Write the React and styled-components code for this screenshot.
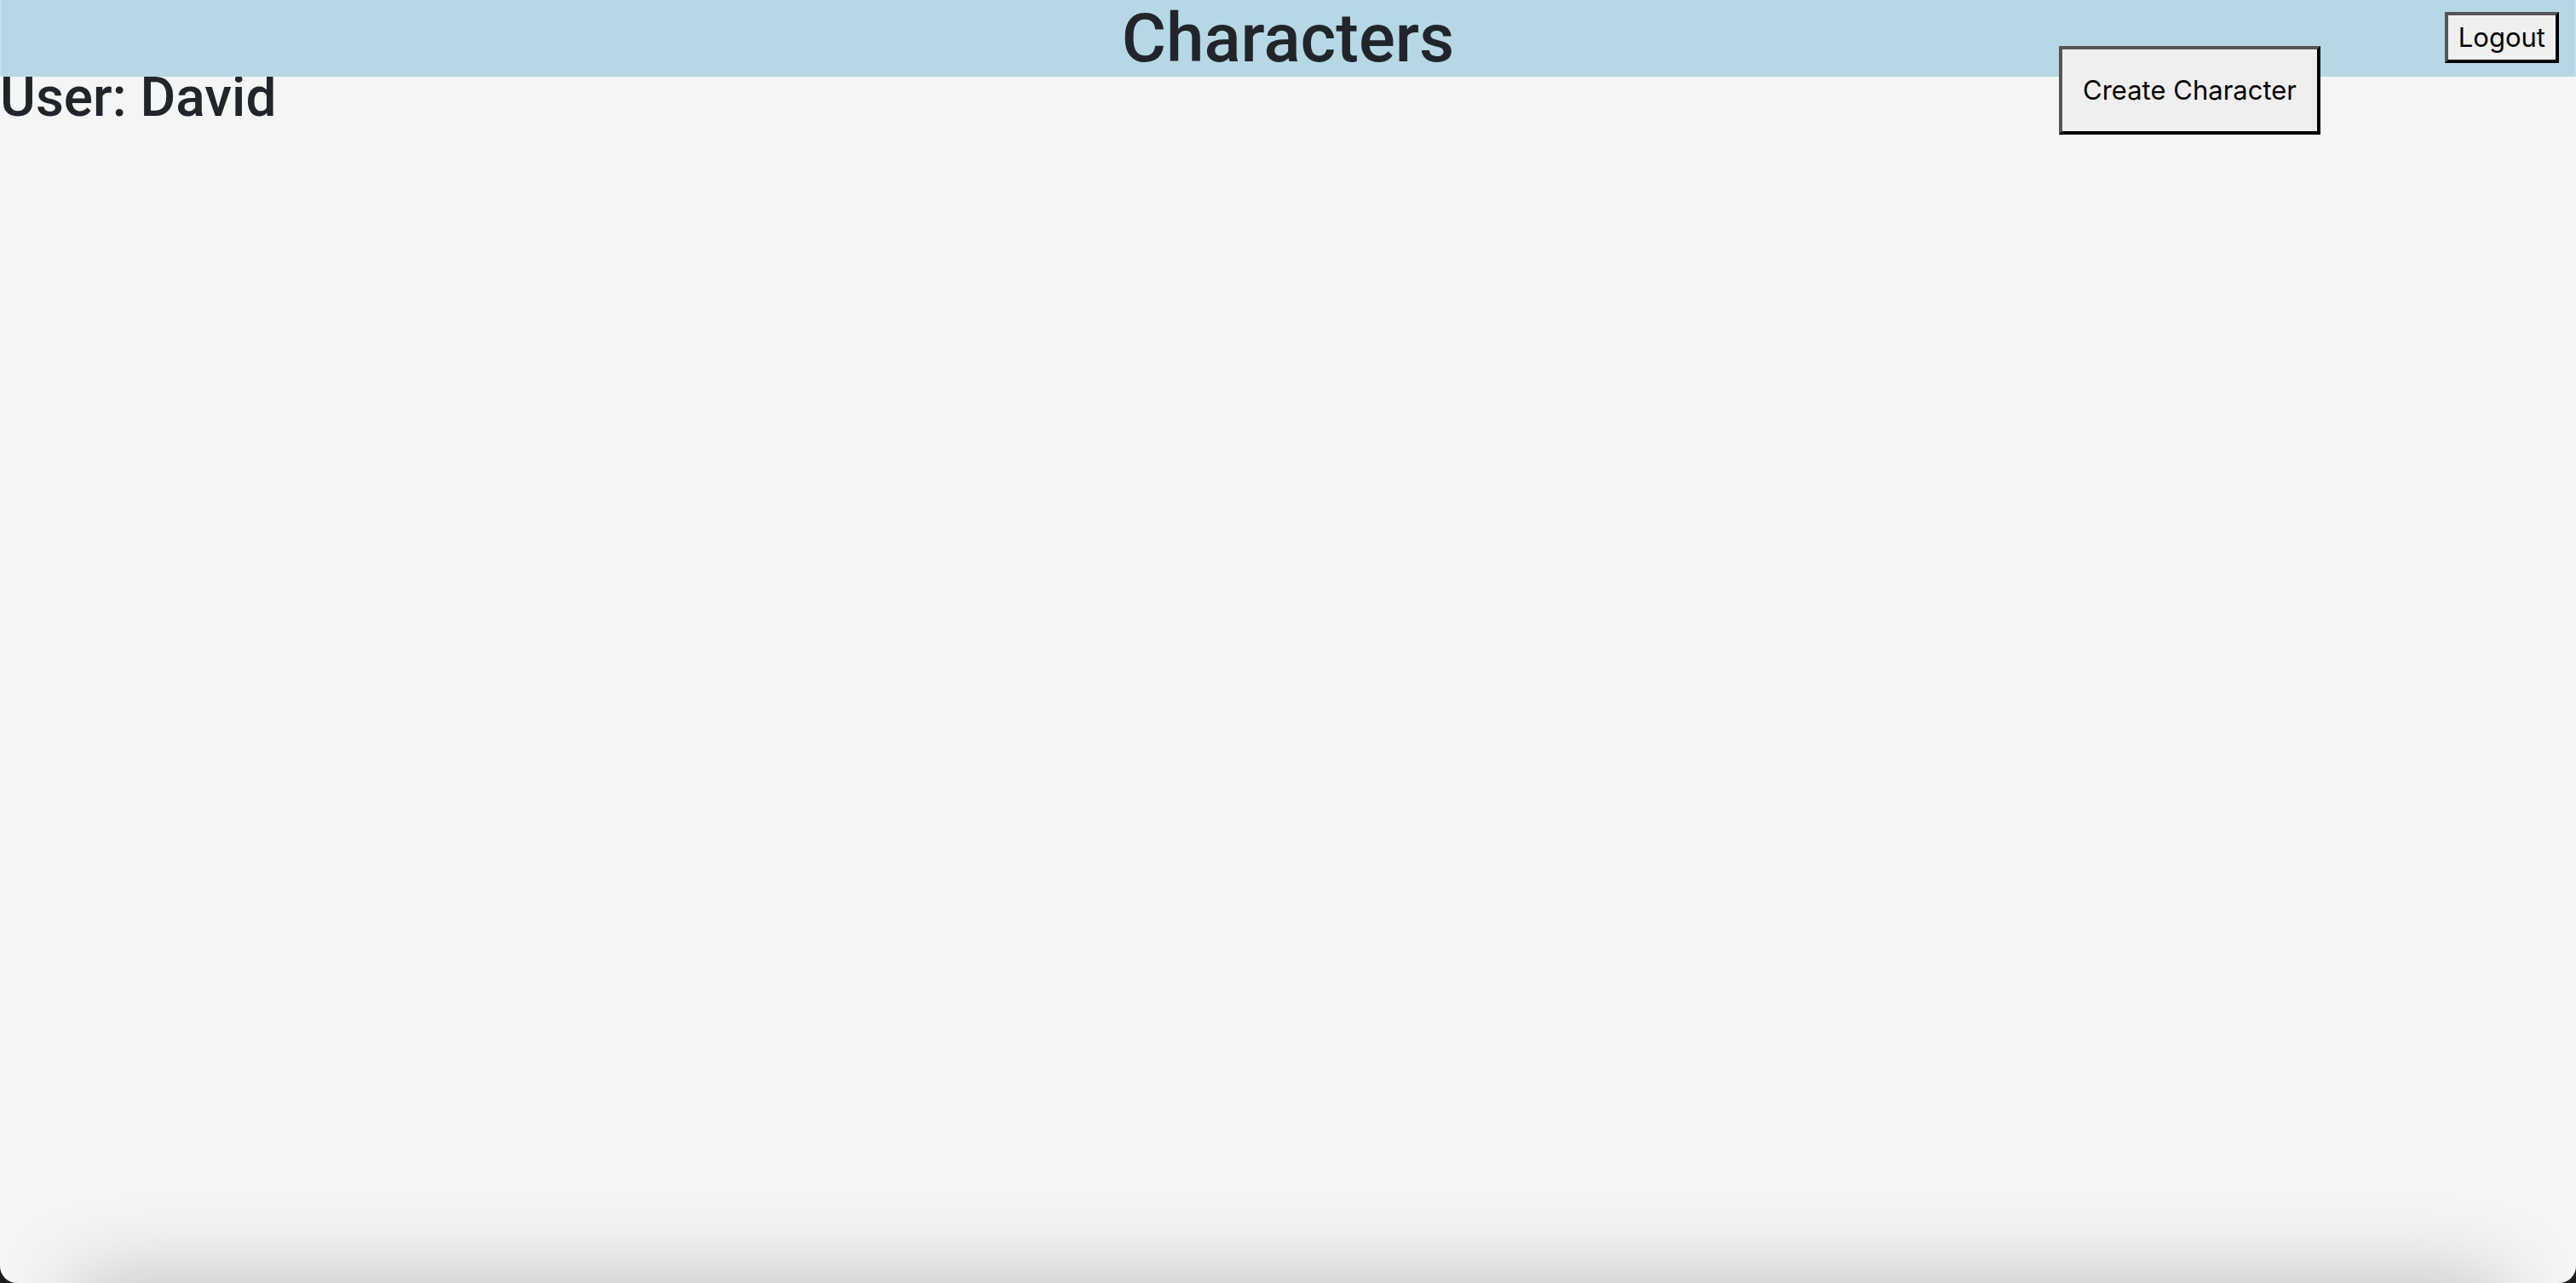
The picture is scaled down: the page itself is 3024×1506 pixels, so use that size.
import React from "react";
import styled, { createGlobalStyle } from "styled-components";

const Global = createGlobalStyle`
  *, *::before, *::after { box-sizing: border-box; }
  html { background: #1c1c1e; }
  body { margin: 0; color: #212529; }
`;

const Page = styled.div`
  position: relative;
  min-height: 100vh;
  overflow: hidden;
  background: #f5f5f5;
  border-radius: 0 0 20px 20px;

  &::after {
    content: "";
    position: absolute;
    inset: 0;
    border: solid rgba(255, 255, 255, 0.2);
    border-width: 0 2px;
    pointer-events: none;
  }
`;

const Header = styled.header`
  position: relative;
  display: flex;
  justify-content: center;
  align-items: center;
  background: #b5d8e4;
`;

const Heading = styled.h1`
  margin: 0;
  font-family: Roboto, "Liberation Sans", sans-serif;
  font-size: 80px;
  line-height: 90px;
  font-weight: 500;
`;

const UserName = styled(Heading)`
  font-size: 64px;
  line-height: 50px;
`;

const Button = styled.button`
  font-family: Inter, "Liberation Sans", sans-serif;
  font-size: 31px;
  line-height: 48px;
  color: #000;
  background: #efefef;
  border: 4px solid;
  border-color: #555 #000 #000 #555;
  border-radius: 0;
  white-space: nowrap;
`;

const LogoutButton = styled(Button)`
  position: absolute;
  top: 14px;
  right: 20px;
  padding: 2px 12px;
`;

const CreateButton = styled(Button)`
  position: absolute;
  top: 54px;
  right: 300px;
  padding: 24px;
`;

const Shade = styled.div`
  position: absolute;
  left: 90px;
  right: 90px;
  bottom: -100px;
  height: 100px;
  box-shadow: 0 0 100px rgba(0, 0, 0, 0.24);
`;

export default function App() {
  return (
    <>
      <Global />
      <Page>
        <Header>
          <Heading>Characters</Heading>
          <LogoutButton type="button">Logout</LogoutButton>
          <CreateButton type="button">Create Character</CreateButton>
        </Header>
        <main>
          <UserName as="h2">User: David</UserName>
        </main>
        <Shade />
      </Page>
    </>
  );
}
